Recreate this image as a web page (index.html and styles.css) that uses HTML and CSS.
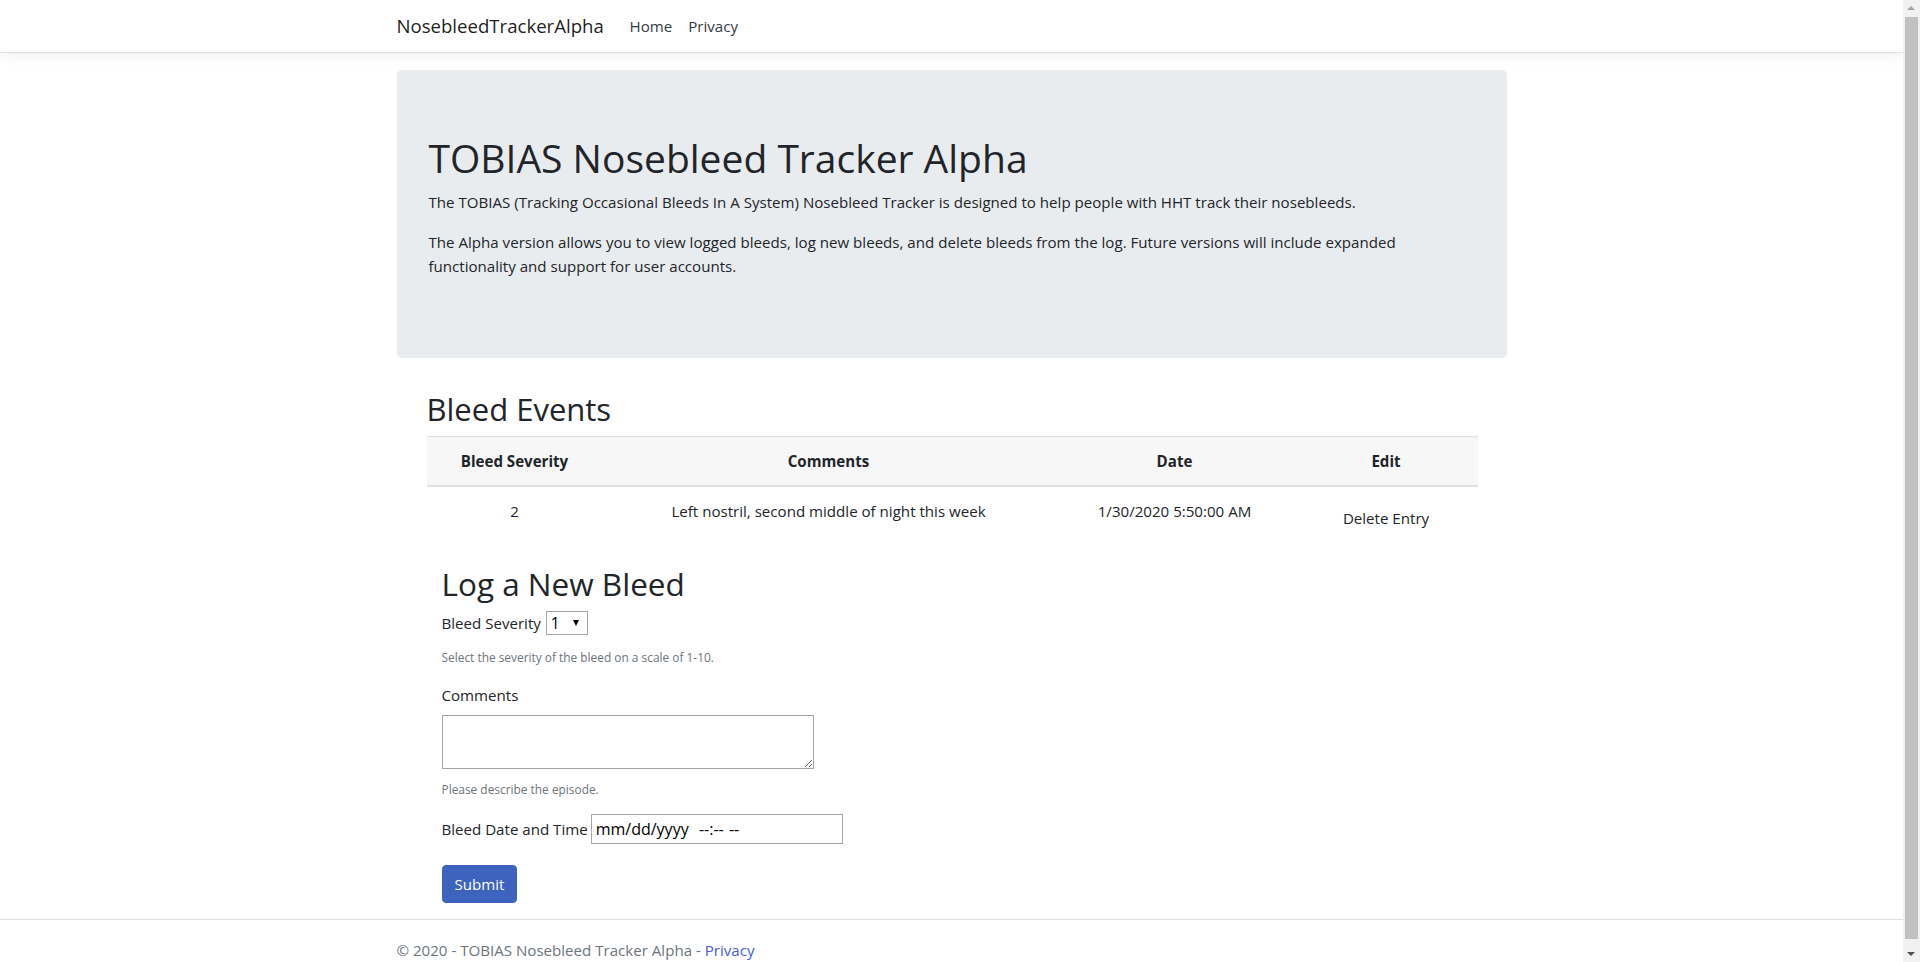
FILE: index.html
```html
<!DOCTYPE html>
<html lang="en">
<head>
<meta charset="utf-8">
<title>Home Page - NosebleedTrackerAlpha</title>
<link rel="stylesheet" href="styles.css">
</head>
<body>
<header>
  <nav class="navbar">
    <div class="container navbar-inner">
      <a class="brand" href="#">NosebleedTrackerAlpha</a>
      <ul class="nav">
        <li><a class="nav-link" href="#">Home</a></li>
        <li><a class="nav-link" href="#">Privacy</a></li>
      </ul>
    </div>
  </nav>
</header>
<div class="container">
  <main class="main">
    <div class="jumbotron">
      <h1 class="title">TOBIAS Nosebleed Tracker Alpha</h1>
      <p class="lead-text">The TOBIAS (Tracking Occasional Bleeds In A System) Nosebleed Tracker is designed to help people with HHT track their nosebleeds.</p>
      <p class="lead-text">The Alpha version allows you to view logged bleeds, log new bleeds, and delete bleeds from the log. Future versions will include expanded functionality and support for user accounts.</p>
    </div>

    <section class="events">
      <h2 class="section-title">Bleed Events</h2>
      <table class="table">
        <colgroup>
          <col class="col-severity">
          <col class="col-comments">
          <col class="col-date">
          <col class="col-edit">
        </colgroup>
        <thead>
          <tr>
            <th>Bleed Severity</th>
            <th>Comments</th>
            <th>Date</th>
            <th>Edit</th>
          </tr>
        </thead>
        <tbody>
          <tr>
            <td>2</td>
            <td>Left nostril, second middle of night this week</td>
            <td>1/30/2020 5:50:00 AM</td>
            <td><button type="button" class="btn-plain">Delete Entry</button></td>
          </tr>
        </tbody>
      </table>
    </section>

    <section class="log">
      <h2 class="section-title log-title">Log a New Bleed</h2>
      <form class="log-form">
        <div class="field-row">
          <label class="field-label" for="severity">Bleed Severity</label>
          <span class="select-wrap">
            <select id="severity" class="select">
              <option>1</option><option>2</option><option>3</option><option>4</option><option>5</option>
              <option>6</option><option>7</option><option>8</option><option>9</option><option>10</option>
            </select>
          </span>
        </div>
        <small class="help help-first">Select the severity of the bleed on a scale of 1-10.</small>

        <label class="field-label block-label" for="comments">Comments</label>
        <textarea id="comments" class="textarea"></textarea>
        <small class="help help-second">Please describe the episode.</small>

        <div class="field-row date-row">
          <label class="field-label" for="date">Bleed Date and Time</label>
          <input id="date" class="date-input" type="text" value="mm/dd/yyyy  --:-- --">
        </div>

        <button type="button" class="btn-submit">Submit</button>
      </form>
    </section>
  </main>
</div>
<footer class="footer">
  <div class="container">© 2020 - TOBIAS Nosebleed Tracker Alpha - <a class="footer-link" href="#">Privacy</a></div>
</footer>

<div class="scrollbar" aria-hidden="true">
  <span class="sb-btn sb-up"></span>
  <span class="sb-track"><span class="sb-thumb"></span></span>
  <span class="sb-btn sb-down"></span>
</div>
</body>
</html>
```

FILE: styles.css
```css
* { box-sizing: border-box; }

html { background: #fff; }

body {
  margin: 0 17px 0 0;
  font-family: "Open Sans", "Noto Sans", sans-serif;
  font-size: 15.1px;
  line-height: 24px;
  color: #212529;
  background: #fff;
}

/* Simulated classic scrollbar (overlays the right edge of the window) */
.scrollbar {
  position: fixed;
  top: 0;
  right: 0;
  width: 17px;
  height: 100vh;
  background: #f1f1f1;
  display: flex;
  flex-direction: column;
}
.sb-btn {
  position: relative;
  flex: 0 0 17px;
}
.sb-btn::after {
  content: "";
  position: absolute;
  left: 4px;
  border-left: 4px solid transparent;
  border-right: 4px solid transparent;
}
.sb-up::after {
  top: 6px;
  border-bottom: 4px solid #a3a3a3;
}
.sb-down::after {
  top: 7px;
  border-top: 4px solid #505050;
}
.sb-track {
  flex: 1;
  display: flex;
  padding: 0 2px 6px;
}
.sb-thumb {
  flex: 1;
  background: #c1c1c1;
}

.container {
  width: 1140px;
  margin: 0 auto;
  padding: 0 15px;
}

/* Navbar */
.navbar {
  height: 53px;
  background: #fff;
  border-bottom: 1px solid #e3e3e3;
  box-shadow: 0 4px 12px rgba(0, 0, 0, 0.05);
}
.navbar-inner {
  display: flex;
  align-items: center;
  height: 52px;
}
.brand {
  flex: 0 0 209px;
  margin-right: 16px;
  font-size: 18.6px;
  line-height: 30px;
  color: rgba(0, 0, 0, 0.9);
  text-decoration: none;
  white-space: nowrap;
}
.nav {
  display: flex;
  list-style: none;
  margin: 0;
  padding: 0;
}
.nav-link {
  display: block;
  padding: 8px 8px;
  font-size: 15.1px;
  color: #343a40;
  text-decoration: none;
}

/* Main */
.main {
  padding-top: 17px;
  padding-bottom: 16px;
}

.jumbotron {
  background: #e9ecef;
  border-radius: 4.8px;
  padding: 64px 32px;
  margin-bottom: 32px;
}
.title {
  margin: 0 0 8px;
  font-size: 39px;
  line-height: 48px;
  font-weight: 400;
}
.lead-text {
  margin: 0 0 16px;
}

.events {
  padding: 0 30px;
}
.section-title {
  margin: 0 0 8px;
  font-size: 31px;
  line-height: 38px;
  font-weight: 400;
}
.log-title {
  font-size: 31.5px;
  margin-bottom: 5px;
}

.table {
  width: 100%;
  border-collapse: collapse;
  table-layout: fixed;
  margin-bottom: 16px;
}
.col-severity { width: 176px; }
.col-comments { width: 452px; }
.col-date { width: 240px; }
.col-edit { width: 183px; }

.table th {
  background: #f7f7f7;
  padding: 12px;
  border-top: 1px solid #dee2e6;
  border-bottom: 2px solid #dee2e6;
  font-weight: 700;
  text-align: center;
  vertical-align: bottom;
}
.table td {
  padding: 12px;
  border-top: 1px solid #dee2e6;
  text-align: center;
  vertical-align: top;
}

.btn-plain {
  font-family: inherit;
  font-size: 15.1px;
  line-height: 24px;
  padding: 6px 12px;
  border: 1px solid transparent;
  background: transparent;
  color: #212529;
  cursor: pointer;
}

/* Log form */
.log {
  padding: 0 45px;
}
.log-form {
  display: flex;
  flex-direction: column;
  align-items: flex-start;
}
.field-row {
  display: flex;
  align-items: center;
  height: 30px;
  gap: 5px;
}
.field-label {
  line-height: 24px;
}
.block-label {
  margin-top: 16px;
  margin-bottom: 8px;
}
.select-wrap {
  position: relative;
  display: block;
}
.select-wrap::after {
  content: "";
  position: absolute;
  right: 9px;
  top: 9px;
  border-left: 3.5px solid transparent;
  border-right: 3.5px solid transparent;
  border-top: 6px solid #000;
  pointer-events: none;
}
.select {
  appearance: none;
  -webkit-appearance: none;
  display: block;
  width: 42px;
  height: 24px;
  margin: 0;
  padding: 0 0 0 4px;
  border: 1px solid #a6a6a6;
  border-radius: 0;
  background: #fff;
  font-family: inherit;
  font-size: 15.5px;
  color: #000;
}
.help {
  display: block;
  font-size: 11.9px;
  line-height: 19px;
  color: #6c757d;
}
.help-first { margin-top: 10px; }
.help-second { margin-top: 11px; }

.textarea {
  display: block;
  width: 372px;
  height: 54px;
  margin: 0;
  border: 1px solid #a6a6a6;
  font-family: inherit;
  font-size: 13px;
}
.date-row {
  margin-top: 15px;
  gap: 3px;
}
.date-input {
  width: 252px;
  height: 30px;
  margin: 0;
  padding: 0 0 0 4px;
  border: 1px solid #a6a6a6;
  border-radius: 0;
  font-family: inherit;
  font-size: 16px;
  word-spacing: 1px;
  color: #000;
}
.btn-submit {
  margin-top: 21px;
  padding: 6px 12px;
  font-family: inherit;
  font-size: 15.1px;
  line-height: 24px;
  color: #fff;
  background: #3d63bf;
  border: 1px solid #3d63bf;
  border-radius: 4px;
  cursor: pointer;
}

/* Footer */
.footer {
  border-top: 1px solid #dee2e6;
  line-height: 60px;
  white-space: nowrap;
  color: #6c757d;
  font-size: 15.1px;
}
.footer-link {
  color: #4a5bd6;
  text-decoration: none;
}
```
